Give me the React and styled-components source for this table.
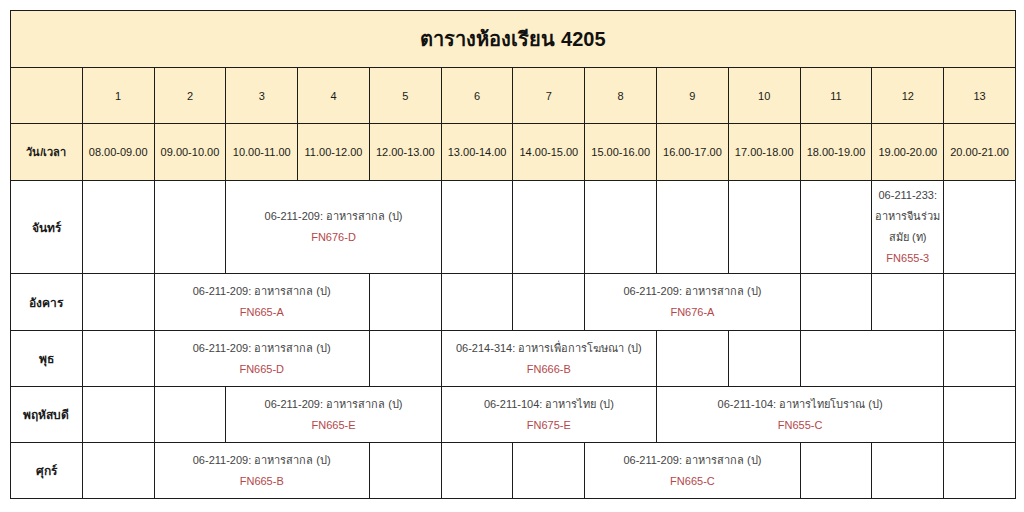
import React from 'react';
import styled, { createGlobalStyle } from 'styled-components';

const GlobalStyle = createGlobalStyle`
    html, body {
        margin: 0;
        padding: 0;
        background: #fff;
    }
    body {
        font-family: Tahoma, "Liberation Sans", "Noto Sans", sans-serif;
    }
`;

const slots = [
    '08.00-09.00', '09.00-10.00', '10.00-11.00', '11.00-12.00', '12.00-13.00',
    '13.00-14.00', '14.00-15.00', '15.00-16.00', '16.00-17.00', '17.00-18.00',
    '18.00-19.00', '19.00-20.00', '20.00-21.00',
];

const intl = ['06-211-209: อาหารสากล (ป)'];

// each row: list of cells, span = number of slots, lines/room for a class
const days = [
    {
        name: 'จันทร์', h: 93, cells: [
            { span: 1 }, { span: 1 },
            { span: 3, lines: intl, room: 'FN676-D' },
            { span: 1 }, { span: 1 }, { span: 1 }, { span: 1 }, { span: 1 }, { span: 1 },
            { span: 1, lines: ['06-211-233:', 'อาหารจีนร่วม', 'สมัย (ท)'], room: 'FN655-3' },
            { span: 1 },
        ]
    },
    {
        name: 'อังคาร', h: 57, cells: [
            { span: 1 },
            { span: 3, lines: intl, room: 'FN665-A' },
            { span: 1 }, { span: 1 }, { span: 1 },
            { span: 3, lines: intl, room: 'FN676-A' },
            { span: 1 }, { span: 1 }, { span: 1 },
        ]
    },
    {
        name: 'พุธ', h: 56, cells: [
            { span: 1 },
            { span: 3, lines: intl, room: 'FN665-D' },
            { span: 1 },
            { span: 3, lines: ['06-214-314: อาหารเพื่อการโฆษณา (ป)'], room: 'FN666-B' },
            { span: 1 }, { span: 1 }, { span: 2 }, { span: 1 },
        ]
    },
    {
        name: 'พฤหัสบดี', h: 56, cells: [
            { span: 1 }, { span: 1 },
            { span: 3, lines: intl, room: 'FN665-E' },
            { span: 3, lines: ['06-211-104: อาหารไทย (ป)'], room: 'FN675-E' },
            { span: 4, lines: ['06-211-104: อาหารไทยโบราณ (ป)'], room: 'FN655-C' },
            { span: 1 },
        ]
    },
    {
        name: 'ศุกร์', h: 56, cells: [
            { span: 1 },
            { span: 3, lines: intl, room: 'FN665-B' },
            { span: 1 }, { span: 1 }, { span: 1 },
            { span: 3, lines: intl, room: 'FN665-C' },
            { span: 1 }, { span: 1 }, { span: 1 },
        ]
    },
];

const App = () => (
    <Page>
        <GlobalStyle />
        <Table>
            <colgroup>
                {Array.from({ length: 14 }).map((_, i) => <col key={i} />)}
            </colgroup>
            <tbody>
                <Row $h={57}>
                    <TitleCell colSpan={14}>ตารางห้องเรียน 4205</TitleCell>
                </Row>
                <Row $h={56}>
                    <HeadCell />
                    {slots.map((_, i) => <HeadCell key={i}>{i + 1}</HeadCell>)}
                </Row>
                <Row $h={57}>
                    <HeadCell $bold>วัน/เวลา</HeadCell>
                    {slots.map((s) => <HeadCell key={s}>{s}</HeadCell>)}
                </Row>
                {days.map((d) => (
                    <Row key={d.name} $h={d.h}>
                        <DayCell>{d.name}</DayCell>
                        {d.cells.map((c, i) => (
                            <Cell key={i} colSpan={c.span}>
                                {c.lines && c.lines.map((l) => <Course key={l}>{l}</Course>)}
                                {c.room && <Room>{c.room}</Room>}
                            </Cell>
                        ))}
                    </Row>
                ))}
            </tbody>
        </Table>
    </Page>
);

export default App;

const Page = styled.div`
    padding: 10px 9px 0 10px;
    width: 1024px;
    height: 512px;
    box-sizing: border-box;
`;

const Table = styled.table`
    width: 1006px;
    border-collapse: collapse;
    table-layout: fixed;

    td {
        border: 1px solid #1c1c1c;
        text-align: center;
        vertical-align: middle;
        padding: 0 2px;
        box-sizing: border-box;
    }
`;

const Row = styled.tr`
    height: ${p => p.$h}px;
`;

const TitleCell = styled.td`
    background: #fdefc9;
    font-size: 20px;
    font-weight: bold;
    color: #111;
`;

const HeadCell = styled.td`
    background: #fdefc9;
    font-size: 11px;
    color: #1a1a1a;
    font-weight: ${p => (p.$bold ? 'bold' : 'normal')};
    white-space: nowrap;
`;

const DayCell = styled.td`
    font-size: 12px;
    font-weight: bold;
    color: #1a1a1a;
`;

const Cell = styled.td`
    font-size: 11px;
    line-height: 21px;
    white-space: nowrap;
`;

const Course = styled.div`
    color: #444;
`;

const Room = styled.div`
    color: #b4474a;
`;
